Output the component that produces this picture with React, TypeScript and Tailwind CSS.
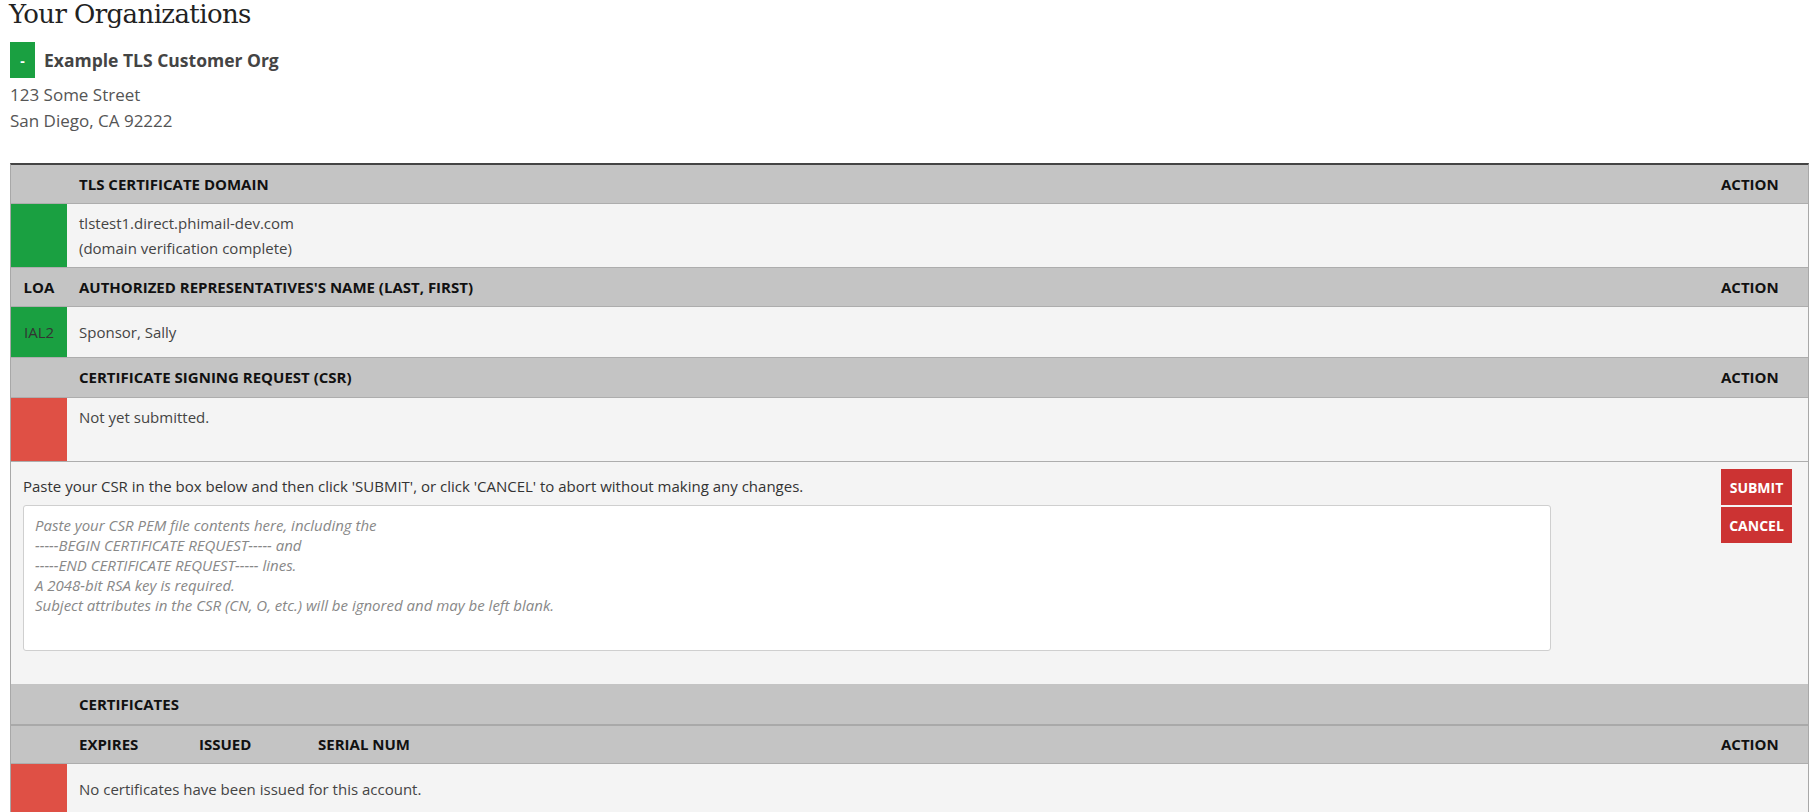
import React from "react";

const GREEN = "bg-[#1aa041]";
const RED = "bg-[#df5045]";

const placeholder = [
  "Paste your CSR PEM file contents here, including the",
  "-----BEGIN CERTIFICATE REQUEST----- and",
  "-----END CERTIFICATE REQUEST----- lines.",
  "A 2048-bit RSA key is required.",
  "Subject attributes in the CSR (CN, O, etc.) will be ignored and may be left blank.",
].join("\n");

type HeaderProps = {
  lead?: string;
  action?: boolean;
  className?: string;
  children?: React.ReactNode;
};

const HeaderRow = ({ lead, action = true, className = "h-[39px] border-b border-[#adadad]", children }: HeaderProps) => (
  <div className={`flex items-center bg-[#c4c4c4] text-[15px] font-bold uppercase text-[#111] ${className}`}>
    <div className="w-[56px] shrink-0 text-center">{lead}</div>
    <div className="flex flex-1 pl-[12px]">{children}</div>
    <div className="w-[87px] shrink-0">{action ? "Action" : ""}</div>
  </div>
);

type DataProps = {
  status: string;
  lead?: string;
  height: string;
  children: React.ReactNode;
};

const DataRow = ({ status, lead, height, children }: DataProps) => (
  <div className={`flex bg-[#f4f4f4] border-b border-[#adadad] text-[15px] text-[#444] ${height}`}>
    <div className={`w-[56px] shrink-0 flex items-center justify-center text-[#333] ${status}`}>{lead}</div>
    <div className="flex flex-1 flex-col justify-center pl-[12px] leading-[25px]">{children}</div>
    <div className="w-[87px] shrink-0" />
  </div>
);

export default function App() {
  return (
    <div className="min-h-screen bg-white font-['Open_Sans',sans-serif] text-[#444]">
      <div className="pl-[9px] pr-[7px]">
        <h1 className="font-['DejaVu_Serif',serif] text-[26px] leading-[28px] tracking-[-0.6px] text-[#222]">
          Your Organizations
        </h1>

        <div className="mt-[14px] flex items-center gap-[9px] pl-[1px]">
          <span className={`flex h-[36px] w-[25px] items-center justify-center text-[14px] font-bold text-white ${GREEN}`}>-</span>
          <span className="text-[17.5px] font-bold text-[#444]">Example TLS Customer Org</span>
        </div>

        <div className="mt-[4px] pl-[1px] text-[17px] leading-[26px] text-[#555]">
          <div>123 Some Street</div>
          <div>San Diego, CA 92222</div>
        </div>

        {/* table */}
        <div className="mt-[29px] ml-[1px] border-t-2 border-t-[#444] border-x border-x-[#a8a8a8] overflow-hidden h-[649px]">
          <HeaderRow>TLS Certificate Domain</HeaderRow>
          <DataRow status={GREEN} height="h-[64px]">
            <div>tlstest1.direct.phimail-dev.com</div>
            <div>(domain verification complete)</div>
          </DataRow>

          <HeaderRow lead="LOA">Authorized Representatives's Name (Last, First)</HeaderRow>
          <DataRow status={GREEN} lead="IAL2" height="h-[51px]">
            <div>Sponsor, Sally</div>
          </DataRow>

          <HeaderRow className="h-[40px] border-b border-[#adadad]">Certificate Signing Request (CSR)</HeaderRow>
          <DataRow status={RED} height="h-[64px]">
            <div>Not yet submitted.</div>
            <div>&nbsp;</div>
          </DataRow>

          {/* CSR entry */}
          <div className="flex h-[222px] bg-[#f4f4f4]">
            <div className="flex-1 pl-[12px] pt-[14px]">
              <p className="text-[15px] leading-[20px] text-[#333]">
                Paste your CSR in the box below and then click 'SUBMIT', or click 'CANCEL' to abort without making any changes.
              </p>
              <textarea
                className="mt-[9px] block h-[146px] w-[1528px] resize-none rounded-[3px] border border-[#cfcfcf] bg-white px-[11px] py-[9px] text-[15px] leading-[20px] outline-none placeholder:italic placeholder:text-[#888]"
                placeholder={placeholder}
              />
            </div>
            <div className="flex w-[87px] shrink-0 flex-col gap-[2px] pt-[7px]">
              <button className="h-[36px] w-[71px] bg-[#cc3333] text-[14px] font-bold text-white">SUBMIT</button>
              <button className="h-[36px] w-[71px] bg-[#cc3333] text-[14px] font-bold text-white">CANCEL</button>
            </div>
          </div>

          <HeaderRow action={false} className="h-[42px] border-b-2 border-[#a9a9a9]">Certificates</HeaderRow>
          <HeaderRow className="h-[38px] border-b border-[#adadad]">
            <span className="w-[120px]">Expires</span>
            <span className="w-[119px]">Issued</span>
            <span>Serial Num</span>
          </HeaderRow>
          <DataRow status={RED} height="h-[51px]">
            <div>No certificates have been issued for this account.</div>
          </DataRow>
        </div>
      </div>
    </div>
  );
}
